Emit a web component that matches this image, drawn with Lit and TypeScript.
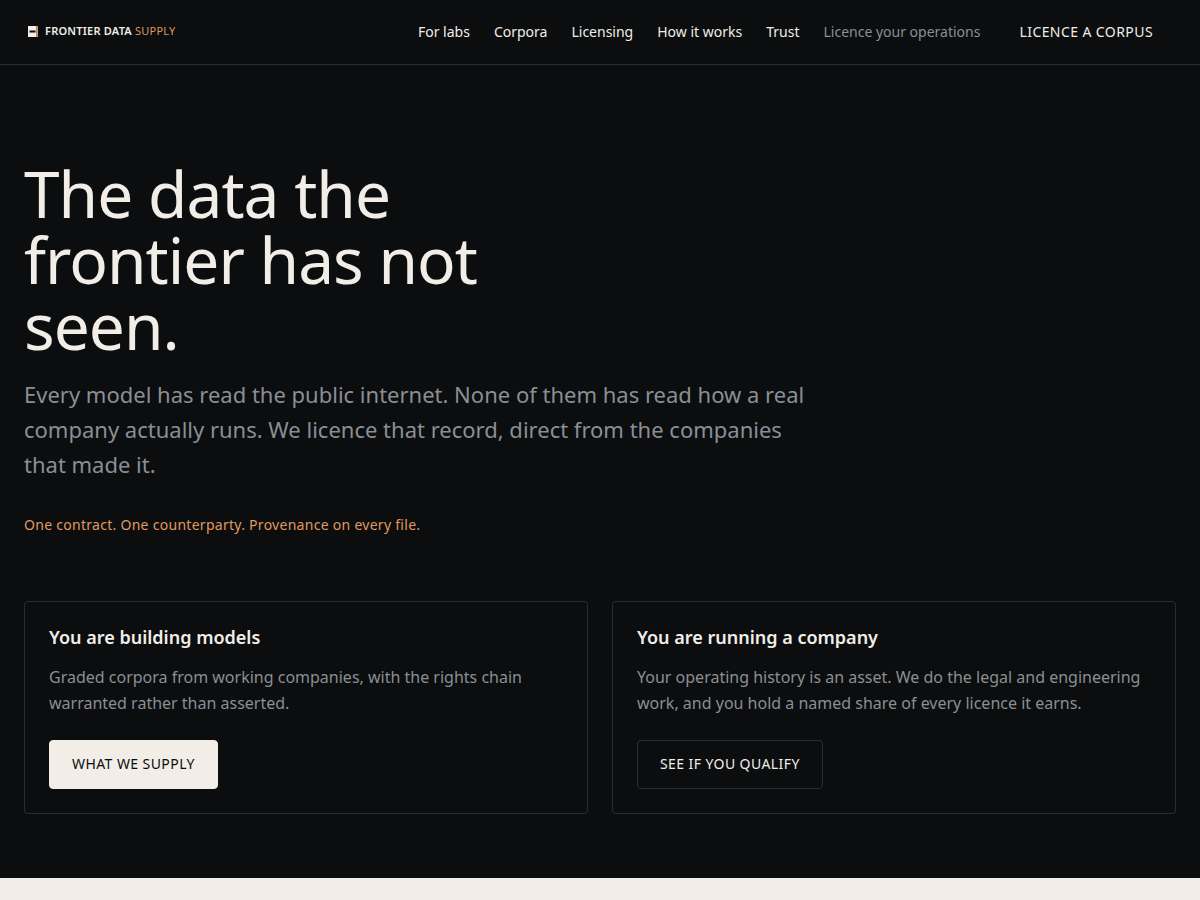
import { LitElement, html, css } from "lit";
import { customElement } from "lit/decorators.js";

@customElement("app-root")
export class AppRoot extends LitElement {
  static styles = css`
    :host {
      display: block;
      min-height: 100vh;
      background: #f2ede7;
      color: #f2ede7;
      font-family: "Noto Sans", sans-serif;
      font-size: 16px;
      line-height: 26px;
    }
    * { box-sizing: border-box; }
    a { color: inherit; text-decoration: none; }
    h1, h2, p { margin: 0; }
    .bar {
      display: flex;
      align-items: center;
      justify-content: space-between;
      height: 65px;
      padding: 0 24px;
      background: #0b0d0f;
      border-bottom: 1px solid #2a2d31;
    }
    .brand {
      display: flex;
      align-items: center;
      gap: 6px;
      padding-left: 3px;
      font-size: 11px;
      font-weight: 600;
      line-height: 15px;
      letter-spacing: 0.02em;
    }
    .brand svg { display: block; }
    .name { padding-bottom: 3px; }
    .supply { color: #d9985f; font-weight: 400; }
    nav { display: flex; align-items: center; gap: 24px; font-size: 14px; line-height: 24px; }
    .muted { color: #8a8f93; }
    .cta {
      padding: 0 23px 0 15px;
      letter-spacing: 0.03em;
    }
    .hero { background: #0b0d0f; padding: 96px 24px 64px; }
    h1 {
      max-width: 520px;
      font-size: 64px;
      font-weight: 400;
      line-height: 66px;
      letter-spacing: -0.015em;
    }
    .lede {
      max-width: 790px;
      margin-top: 18px;
      font-size: 22px;
      line-height: 35px;
      color: #8a8f93;
    }
    .note {
      margin-top: 32px;
      font-size: 14px;
      line-height: 21px;
      letter-spacing: 0.02em;
      color: #e09a5e;
    }
    .cards {
      display: grid;
      grid-template-columns: repeat(2, 1fr);
      gap: 24px;
      margin-top: 66px;
    }
    .card { padding: 24px; border: 1px solid #2a2d31; border-radius: 4px; }
    h2 { font-size: 18px; font-weight: 600; line-height: 22px; }
    .card p { margin: 16px 0 24px; color: #8a8f93; }
    .button {
      display: inline-block;
      padding: 12px 22px 13px;
      border: 1px solid #2a2d31;
      border-radius: 4px;
      font-size: 14px;
      line-height: 22px;
      letter-spacing: 0.03em;
    }
    .solid { background: #f2ede7; border-color: #f2ede7; color: #0b0d0f; }
  `;

  render() {
    return html`
      <header class="bar">
        <a class="brand" href="#">
          <svg width="12" height="12" viewBox="0 0 12 12" aria-hidden="true">
            <rect x="1" y="0" width="8.5" height="11" fill="#f2ede7" />
            <rect x="9.5" y="0" width="1.5" height="11" fill="#d9985f" />
            <rect x="2.5" y="4.5" width="6" height="2" fill="#0b0d0f" />
          </svg>
          <span class="name">FRONTIER DATA <span class="supply">SUPPLY</span></span>
        </a>
        <nav aria-label="Main">
          <a href="#">For labs</a>
          <a href="#">Corpora</a>
          <a href="#">Licensing</a>
          <a href="#">How it works</a>
          <a href="#">Trust</a>
          <a class="muted" href="#">Licence your operations</a>
          <a class="cta" href="#">LICENCE A CORPUS</a>
        </nav>
      </header>
      <main class="hero">
        <h1>The data the frontier has not seen.</h1>
        <p class="lede">Every model has read the public internet. None of them has read how a real company actually runs. We licence that record, direct from the companies that made it.</p>
        <p class="note">One contract. One counterparty. Provenance on every file.</p>
        <div class="cards">
          <section class="card">
            <h2>You are building models</h2>
            <p>Graded corpora from working companies, with the rights chain warranted rather than asserted.</p>
            <a class="button solid" href="#">WHAT WE SUPPLY</a>
          </section>
          <section class="card">
            <h2>You are running a company</h2>
            <p>Your operating history is an asset. We do the legal and engineering work, and you hold a named share of every licence it earns.</p>
            <a class="button" href="#">SEE IF YOU QUALIFY</a>
          </section>
        </div>
      </main>
    `;
  }
}
